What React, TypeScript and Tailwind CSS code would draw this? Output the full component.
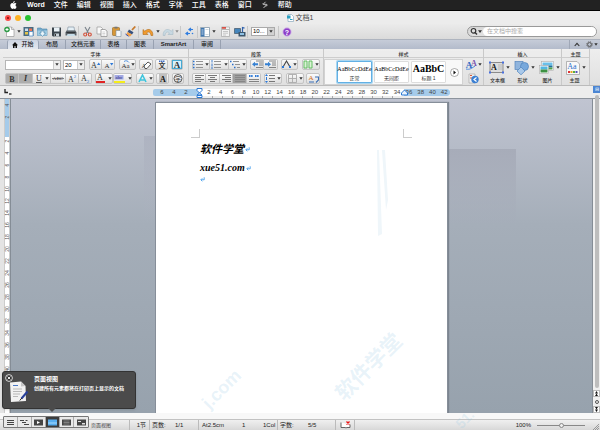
import React from 'react';

const menus = ['文件', '编辑', '视图', '插入', '格式', '字体', '工具', '表格', '窗口'];

const tabs = [
  { label: '布局', width: 'w-[27px]' },
  { label: '文档元素', width: 'w-[35px]' },
  { label: '表格', width: 'w-[26px]' },
  { label: '图表', width: 'w-[27px]' },
  { label: 'SmartArt', width: 'w-[40px]' },
  { label: '审阅', width: 'w-[27px]' },
];

const rulerNumbers = Array.from({ length: 21 }, (_, i) => (i + 1) * 2);
const verticalNumbers = ['4', '2', '', '2', '4', '6', '8', '10', '12', '14', '16', '18', '20', '22', '24', '26', '28', '30', '32', '34', '36', '38', '40', '42', '44'];

interface IconProps {
  w?: number;
  h?: number;
  children: React.ReactNode;
}

const Icon: React.FC<IconProps> = ({ w = 12, h = 10, children }) => (
  <svg width={w} height={h} viewBox={`0 0 ${w} ${h}`} fill="none" className="shrink-0" aria-hidden="true">
    {children}
  </svg>
);

const Arrow: React.FC = () => (
  <svg width="4" height="3" viewBox="0 0 4 3" className="shrink-0" aria-hidden="true">
    <path d="M0.3 0.3h3.4L2 2.8z" fill="#333" />
  </svg>
);

interface ButtonProps {
  label: string;
  className?: string;
  children: React.ReactNode;
}

// Raised ribbon button, used alone or inside a joined strip
const RibbonButton: React.FC<ButtonProps> = ({ label, className = '', children }) => (
  <button
    type="button"
    aria-label={label}
    className={`h-[11px] shrink-0 flex items-center justify-center rounded-[2px] border border-[#c4c4c4] bg-linear-to-b from-[#fbfbfb] to-[#dedede] ${className}`}
  >
    {children}
  </button>
);

const ToolButton: React.FC<ButtonProps> = ({ label, className = '', children }) => (
  <button type="button" aria-label={label} className={`h-[13px] shrink-0 flex items-center justify-center ${className}`}>
    {children}
  </button>
);

const Divider: React.FC = () => <span className="h-3 w-px shrink-0 bg-[#c8c8c8]" />;

const Letter: React.FC<{ x?: number; y?: number; size?: number; fill?: string; bold?: boolean; children: string }> = ({
  x = 5,
  y = 8,
  size = 8,
  fill = '#333',
  bold,
  children,
}) => (
  <text x={x} y={y} fontSize={size} fill={fill} textAnchor="middle" fontWeight={bold ? 700 : 400} fontFamily="Liberation Serif, Noto Sans CJK SC, serif">
    {children}
  </text>
);

const Lines: React.FC<{ rows: number[][]; color?: string }> = ({ rows, color = '#777' }) => (
  <>
    {rows.map(([x1, x2], i) => (
      <path key={i} d={`M${x1} ${1.5 + i * 2}H${x2}`} stroke={color} strokeWidth="1" />
    ))}
  </>
);

const MenuBar: React.FC = () => (
  <nav className="h-[11px] shrink-0 flex items-center gap-[9px] bg-[#222] border-b border-black pl-[10px] text-[7px] leading-[10px] font-medium text-white">
    <button type="button" aria-label="Apple" className="mr-px">
      <svg width="7" height="8" viewBox="0 0 14 16" fill="#fff" aria-hidden="true">
        <path d="M9.6 0c.1 1.3-.4 2.1-1 2.8-.7.7-1.500 1-2.300 1C6.200 2.600 6.700 1.800 7.300 1.200 7.900.5 8.800.1 9.600 0zM12.900 5.500c-1.200.7-1.800 1.600-1.800 2.900 0 1.400.8 2.500 2.100 3-.6 1.800-1.900 4.400-3.500 4.400-.9 0-1.400-.6-2.500-.6s-1.600.6-2.500.6C2.900 15.800.6 12.400.6 9c0-3 1.900-4.800 3.900-4.800 1.100 0 1.900.7 2.700.7.700 0 1.700-.8 3-.8 1.100 0 2 .5 2.700 1.400z" />
      </svg>
    </button>
    <button type="button" className="font-bold">Word</button>
    {menus.map((item) => (
      <button key={item} type="button" className="shrink-0">{item}</button>
    ))}
    <button type="button" aria-label="脚本" className="w-[8px]">
      <svg width="8" height="8" viewBox="0 0 8 8" fill="none" stroke="#bbb" aria-hidden="true">
        <path d="M4.500.8L2.300 3.200l3.600.2L2.500 7M1.500 2.700l2 1M4.500 5.200l2-.9" strokeWidth="1" />
      </svg>
    </button>
    <button type="button" className="shrink-0">帮助</button>
  </nav>
);

const TitleBar: React.FC = () => (
  <header className="h-[13px] shrink-0 flex items-center bg-[#ececec] px-[5px]">
    <div className="flex-1 flex gap-1">
      <button type="button" aria-label="关闭" className="size-[6px] rounded-full bg-[#fb4b48] flex items-center justify-center">
        <span className="size-[2px] rounded-full bg-[#7d0d0b]" />
      </button>
      <button type="button" aria-label="最小化" className="size-[6px] rounded-full bg-[#fdb124]" />
      <button type="button" aria-label="缩放" className="size-[6px] rounded-full bg-[#28c231]" />
    </div>
    <h1 className="flex items-center gap-[2px] text-[7px] leading-[10px] text-[#444]">
      <Icon w={7} h={8}>
        <path d="M1 .5h3.500L6.500 2.500v5H1z" fill="#fff" stroke="#8ba9bd" strokeWidth=".7" />
        <path d="M0 1.500h3.500v3H0z" fill="#2b9fc0" />
        <path d="M3 5.500h2.500" stroke="#2b9fc0" />
      </Icon>
      文档1
    </h1>
    <div className="flex-1" />
  </header>
);

const Toolbar: React.FC = () => (
  <div className="h-[15px] shrink-0 flex items-center bg-linear-to-b from-[#ebebeb] to-[#dadada] pl-[3px] pr-[3px]">
    <ToolButton label="新建" className="w-[18px] gap-[2px]">
      <Icon w={11} h={11}>
        <path d="M2.500 1h5l2.500 2.500V10.500h-7.500z" fill="#fff" stroke="#999" strokeWidth=".7" />
        <path d="M7.500 1v2.500H10" stroke="#999" strokeWidth=".7" />
        <circle cx="3" cy="3.500" r="2.800" fill="#2f9b46" />
        <path d="M3 2v3M1.500 3.500h3" stroke="#fff" />
      </Icon>
      <Arrow />
    </ToolButton>
    <ToolButton label="模板" className="w-[14px]">
      <Icon w={11} h={11}>
        <rect x=".5" y="1" width="10" height="9" fill="#496b82" />
        <path d="M2 2.500h3v2.500H2z" fill="#cbe1ee" /><path d="M6 2.500h3v2.500H6z" fill="#ed7454" />
        <path d="M2 6h3v2.500H2z" fill="#e5c349" /><path d="M6 5.500h4v4.500H6z" fill="#fff" stroke="#4a8ac7" strokeWidth=".7" />
      </Icon>
    </ToolButton>
    <ToolButton label="打开" className="w-[14px]">
      <Icon w={11} h={11}>
        <path d="M.5 2h3.500l1 1H10v6.500H.5z" fill="#74aacb" stroke="#4d88ac" strokeWidth=".6" />
        <path d="M.5 4.500h9.500v5H.5z" fill="#9ecae2" />
        <path d="M4 5h3v2h1.500L5.500 10.500 2.500 7H4z" fill="#e8f4fa" stroke="#4d88ac" strokeWidth=".6" />
      </Icon>
    </ToolButton>
    <ToolButton label="保存" className="w-[14px]">
      <Icon w={11} h={11}>
        <path d="M1 1.500h9v9H2l-1-1z" fill="#3b444c" /><path d="M3 1.500h5.500v4H3z" fill="#e9f1f6" />
        <path d="M3.500 7.500H8v3H3.500z" fill="#c9d2d8" /><path d="M4.500 8v2" stroke="#333" />
      </Icon>
    </ToolButton>
    <ToolButton label="打印" className="w-[15px]">
      <Icon w={12} h={11}>
        <path d="M3 1h6l.6 4H2.400z" fill="#e4eff5" stroke="#789" strokeWidth=".6" />
        <path d="M1.500 4.500h9l1 2v3h-11v-3z" fill="#5b6268" /><path d="M2.500 8h7l.8 2H1.700z" fill="#c5dce8" />
        <path d="M1.500 6.500h9" stroke="#2e3337" />
      </Icon>
    </ToolButton>
    <Divider />
    <ToolButton label="剪切" className="w-[16px]">
      <Icon w={11} h={11}>
        <path d="M3 1l3.500 6.200M8 1L4.500 7.200" stroke="#79828a" strokeWidth="1.100" />
        <circle cx="3.200" cy="8.500" r="1.500" stroke="#d34e37" strokeWidth="1.100" />
        <circle cx="7.800" cy="8.500" r="1.500" stroke="#d34e37" strokeWidth="1.100" />
      </Icon>
    </ToolButton>
    <ToolButton label="复制" className="w-[14px]">
      <Icon w={12} h={11}>
        <path d="M1 1h4l1.500 1.500V8H1z" fill="#fafafa" stroke="#999" strokeWidth=".7" />
        <path d="M5 3.500h4L11 5v5.500H5z" fill="#fff" stroke="#888" strokeWidth=".7" />
        <path d="M6.300 6h3M6.300 7.500h3M6.300 9h3" stroke="#bbb" strokeWidth=".6" />
      </Icon>
    </ToolButton>
    <ToolButton label="粘贴" className="w-[14px]">
      <Icon w={11} h={11}>
        <rect x="1.500" y="1.500" width="7" height="8" rx=".8" fill="#d79737" stroke="#94651c" strokeWidth=".6" />
        <path d="M3.500.7h3v1.800h-3z" fill="#777" />
        <path d="M5 4.500h4l1 1v5H5z" fill="#f5f8fa" stroke="#7b8fa0" strokeWidth=".6" />
      </Icon>
    </ToolButton>
    <ToolButton label="格式刷" className="w-[15px]">
      <Icon w={11} h={11}>
        <path d="M10.300.5L7 4" stroke="#c77a2d" strokeWidth="1.800" />
        <path d="M4 3.500l4.500 2.700L7 8.500 2.500 6z" fill="#37507d" />
        <path d="M2.500 6L7 8.500 5 10.500.8 9z" fill="#efa04b" />
        <path d="M.5 8l3 2.300" stroke="#2d4fc0" />
      </Icon>
    </ToolButton>
    <Divider />
    <ToolButton label="撤消" className="ml-[2px] w-[20px] gap-[2px]">
      <Icon w={12} h={10}>
        <path d="M1 2.500v5h5L4.500 6C6.500 4.200 8.500 4.800 9 8.500h1.800C11.200 3 6.500.5 2.800 4.200z" fill="#f19b2e" stroke="#b06a16" strokeWidth=".6" />
      </Icon>
      <Arrow />
    </ToolButton>
    <ToolButton label="恢复" className="w-[19px] gap-px opacity-50">
      <Icon w={12} h={10}>
        <path d="M11 2.500v5H6L7.500 6C5.500 4.200 3.500 4.800 3 8.500H1.200C.8 3 5.500.5 9.200 4.200z" fill="#b0d1e3" stroke="#6f98b0" strokeWidth=".6" />
      </Icon>
      <Arrow />
    </ToolButton>
    <Divider />
    <ToolButton label="显示标记" className="w-[16px]">
      <Icon w={9} h={9}>
        <path d="M1 6.500h4M3 5L1 6.500 3 8M5 2.500h3M6 1L4 2.500 6 4" stroke="#2f7de0" strokeWidth="1.200" />
        <circle cx="7.500" cy="6.500" r=".8" fill="#2f7de0" />
      </Icon>
    </ToolButton>
    <Divider />
    <ToolButton label="侧边栏" className="ml-px w-[18px] gap-[2px]">
      <Icon w={10} h={10}>
        <path d="M.5.5h9v9h-9z" fill="#fff" stroke="#8297a8" strokeWidth=".8" />
        <path d="M1 1h3.500v8.500H1z" fill="#4077b0" /><path d="M1.500 3h2M1.500 5h2M1.500 7h2" stroke="#fff" strokeWidth=".7" />
        <path d="M5.500 2.500h3M5.500 7.500h3" stroke="#bcc8d0" strokeWidth=".7" />
      </Icon>
      <Arrow />
    </ToolButton>
    <ToolButton label="工具箱" className="w-[16px]">
      <Icon w={9} h={11}>
        <path d="M.5 1h8v9.500h-8z" fill="#f3f3f3" stroke="#a6a6a6" strokeWidth=".7" />
        <path d="M1 1h4v1.800H1z" fill="#d75349" /><path d="M1 3.500h7" stroke="#999" strokeWidth=".7" />
        <path d="M2 5.500h5M2 7.200h5M2 9h3" stroke="#b3b3b3" strokeWidth=".7" />
      </Icon>
    </ToolButton>
    <ToolButton label="媒体浏览器" className="w-[14px]">
      <Icon w={12} h={11}>
        <path d="M.5 2.500h6v5h-6z" fill="#4585bb" stroke="#345" strokeWidth=".6" />
        <path d="M4.500 6h7v4.500h-7z" fill="#3d566c" /><path d="M6 7h4v2H6z" fill="#8ec1e5" />
        <path d="M8.500 6V1.500l2 .6" stroke="#3062ad" strokeWidth="1.200" />
      </Icon>
    </ToolButton>
    <Divider />
    <div className="relative mx-[3px] h-[9px] w-[24px] shrink-0">
      <select aria-label="显示比例" className="block h-[9px] w-full appearance-none border border-[#aaa] bg-white pl-px pr-[7px] text-[6px] leading-[7px] text-black">
        <option>10...</option>
      </select>
      <span className="pointer-events-none absolute inset-y-0 right-0 flex w-[8px] items-center justify-center border border-[#aaa] bg-[#d2d2d2]">
        <Arrow />
      </span>
    </div>
    <Divider />
    <ToolButton label="帮助" className="w-[16px]">
      <svg width="10" height="10" viewBox="0 0 10 10" aria-hidden="true">
        <circle cx="5" cy="5" r="4.200" fill="#8d3fc9" stroke="#d9c4e9" />
        <text x="5" y="7.500" textAnchor="middle" fontSize="7" fontWeight="700" fill="#fff" fontFamily="Liberation Sans, sans-serif">?</text>
      </svg>
    </ToolButton>
    <label className="ml-auto flex h-[11px] w-[130px] items-center overflow-hidden rounded-full border border-[#999] bg-[#e0e0e0] shadow-inner">
      <svg width="15" height="9" viewBox="0 0 15 9" fill="none" className="shrink-0" aria-hidden="true">
        <circle cx="5.500" cy="3.800" r="2.300" stroke="#333" strokeWidth="1.200" />
        <path d="M7 5.500l2 2" stroke="#333" strokeWidth="1.500" />
        <path d="M10 3.300h4L12 6z" fill="#333" />
      </svg>
      <input type="search" aria-label="搜索" placeholder="在文档中搜索" className="h-[9px] w-0 flex-1 rounded-l-full bg-white pl-1 text-[6px] leading-[9px] placeholder:text-[#aaa] outline-none" />
    </label>
  </div>
);

const TabBar: React.FC = () => (
  <div className="h-[10px] shrink-0 flex bg-linear-to-b from-[#c6ccd8] to-[#b3bbcb] border-t border-[#aeb4bf] pl-[7px] text-[6px] leading-[9px] text-[#222]">
    <button type="button" className="flex w-[32px] items-center justify-center gap-[3px] rounded-t-[2px] bg-linear-to-b from-[#cdd5e3] to-[#e3e7ef] border-x border-[#9aa4b5] font-medium">
      <svg width="6" height="6" viewBox="0 0 6 6" aria-hidden="true">
        <path d="M3 0L0 3.200h1V6h1.500V4h1v2H5V3.200h1z" fill="#111" />
      </svg>
      开始
    </button>
    {tabs.map((tab) => (
      <button
        key={tab.label}
        type="button"
        className={`${tab.width} border-r border-[#98a1b1] ${tab.label === 'SmartArt' ? 'font-bold' : 'font-medium'}`}
      >
        {tab.label}
      </button>
    ))}
    <div className="ml-auto flex items-center gap-[6px] border-l border-[#a0a8b7] pl-1 pr-[2px]">
      <button type="button" aria-label="折叠功能区">
        <svg width="6" height="5" viewBox="0 0 6 5" fill="none" aria-hidden="true">
          <path d="M.7 4L3 1.300 5.300 4" stroke="#333" strokeWidth="1.100" />
        </svg>
      </button>
      <button type="button" aria-label="功能区首选项" className="flex items-center gap-px">
        <svg width="7" height="7" viewBox="0 0 7 7" fill="none" aria-hidden="true">
          <circle cx="3.500" cy="3.500" r="1.900" stroke="#555" strokeWidth="1" />
          <circle cx="3.500" cy="3.500" r="2.800" stroke="#555" strokeWidth=".9" strokeDasharray="1.100 1.100" />
        </svg>
        <Arrow />
      </button>
    </div>
  </div>
);

const Group: React.FC<{ title: string; className?: string; children: React.ReactNode }> = ({ title, className = '', children }) => (
  <section className={`flex flex-col border-r border-[#c9c9c9] ${className}`}>
    <h2 className="mt-[2px] mb-[1px] h-[7px] border-b border-[#cdcdcd] bg-[#ececec] text-center text-[5px] leading-[6px] font-medium text-[#333]">{title}</h2>
    {children}
  </section>
);

const FontGroup: React.FC = () => (
  <Group title="字体" className="w-[186px] shrink-0">
    <div className="flex flex-col gap-[3px] pl-[2px]">
      <div className="flex items-center">
        <div className="flex h-[10px] w-[56px] border border-[#b5b5b5] bg-white">
          <input aria-label="字体名称" className="w-0 flex-1 text-[6px] leading-[8px] outline-none" />
          <button type="button" aria-label="选择字体" className="flex w-[7px] items-center justify-center border-l border-[#ccc] bg-[#eee]"><Arrow /></button>
        </div>
        <div className="ml-[2px] flex h-[10px] w-[22px] border border-[#b5b5b5] bg-white">
          <input aria-label="字号" defaultValue="20" className="w-0 flex-1 pl-px text-[6px] leading-[8px] outline-none" />
          <button type="button" aria-label="选择字号" className="flex w-[7px] items-center justify-center border-l border-[#ccc] bg-[#eee]"><Arrow /></button>
        </div>
        <RibbonButton label="增大字号" className="ml-[4px] w-[13px] rounded-r-none">
          <Icon w={11} h={9}><Letter x={4}>A</Letter><path d="M7 5l1.700-2.500L10.400 5z" fill="#2b78d8" /></Icon>
        </RibbonButton>
        <RibbonButton label="减小字号" className="w-[13px] rounded-l-none border-l-0">
          <Icon w={11} h={9}><Letter x={4} size={7}>A</Letter><path d="M7 3l1.700 2.500L10.400 3z" fill="#2b78d8" /></Icon>
        </RibbonButton>
        <RibbonButton label="更改大小写" className="ml-[4px] w-[17px] gap-px">
          <Icon w={9} h={9}><Letter x={3} size={7}>A</Letter><Letter x={7} size={7}>a</Letter><path d="M3 1.500c2-1.500 4-.5 5 1" stroke="#2b78d8" strokeWidth=".8" /></Icon>
          <Arrow />
        </RibbonButton>
        <RibbonButton label="清除格式" className="ml-[3px] w-[14px]">
          <Icon w={11} h={9}><Letter x={3} size={6}>A</Letter><path d="M3 6l4-4 3 2-4 4.500H4z" fill="#fff" stroke="#444" strokeWidth=".9" /></Icon>
        </RibbonButton>
        <RibbonButton label="拼音指南" className="ml-[2px] w-[13px]">
          <Icon w={10} h={9}><path d="M2 1.300h6" stroke="#3f6cc4" strokeWidth="1.500" strokeDasharray="1.500 .5" /><Letter y={8} size={7} bold>文</Letter></Icon>
        </RibbonButton>
        <RibbonButton label="字符边框" className="ml-[3px] w-[12px]">
          <Icon w={10} h={9}><rect x=".5" y=".5" width="9" height="8" fill="#d8f0fa" stroke="#48a9d2" /><Letter y={8} size={9} bold>A</Letter></Icon>
        </RibbonButton>
      </div>
      <div className="flex items-center">
        <RibbonButton label="粗体" className="w-[14px] rounded-r-none bg-none bg-[#adadad] border-[#8b8b8b]">
          <Icon w={10} h={9}><Letter bold>B</Letter></Icon>
        </RibbonButton>
        <RibbonButton label="斜体" className="w-[14px] rounded-none border-l-0 bg-none bg-[#adadad] border-[#8b8b8b]">
          <span className="font-[Liberation_Serif] text-[8px] leading-[8px] italic font-bold text-[#333]">I</span>
        </RibbonButton>
        <RibbonButton label="下划线" className="w-[18px] gap-[2px] rounded-none border-l-0">
          <Icon w={8} h={9}><Letter x={4} y={7}>U</Letter><path d="M1 8.500h6" stroke="#333" strokeWidth=".8" /></Icon>
          <Arrow />
        </RibbonButton>
        <RibbonButton label="删除线" className="w-[15px] rounded-none border-l-0">
          <Icon w={13} h={9}><Letter x={6} y={6} size={5}>ABC</Letter><path d="M0 4.500h12" stroke="#333" strokeWidth=".6" /></Icon>
        </RibbonButton>
        <RibbonButton label="上标" className="w-[13px] rounded-none border-l-0">
          <Icon w={10} h={9}><Letter x={4}>A</Letter><Letter x={8} y={4} size={5} fill="#2b78d8">2</Letter></Icon>
        </RibbonButton>
        <RibbonButton label="下标" className="w-[13px] rounded-l-none border-l-0">
          <Icon w={10} h={9}><Letter x={4} y={7}>A</Letter><Letter x={8} y={9} size={5} fill="#2b78d8">2</Letter></Icon>
        </RibbonButton>
        <RibbonButton label="字体颜色" className="ml-[3px] w-[18px] gap-[3px]">
          <Icon w={9} h={9}><Letter x={4} y={6}>A</Letter><path d="M0 8h9" stroke="#e02424" strokeWidth="2" /></Icon>
          <Arrow />
        </RibbonButton>
        <RibbonButton label="突出显示" className="w-[19px] gap-[3px]">
          <Icon w={11} h={9}><path d="M.5 1h9v4.500h-9z" fill="#a3a9e2" /><Letter x={5} y={5} size={5} fill="#2b2b80">abc</Letter><path d="M0 8h11" stroke="#f4ec1c" strokeWidth="2" /></Icon>
          <Arrow />
        </RibbonButton>
        <RibbonButton label="文本效果" className="ml-[4px] w-[18px] gap-[2px]">
          <Icon w={9} h={9}><path d="M1 8L4.500 1 8 8M2.500 6h4" stroke="#3fc5dd" strokeWidth="1.600" /></Icon>
          <Arrow />
        </RibbonButton>
        <RibbonButton label="字符底纹" className="ml-[2px] w-[13px]">
          <Icon w={10} h={9}><path d="M1 0h8v9H1z" fill="#c0c0c0" /><Letter bold fill="#111">A</Letter></Icon>
        </RibbonButton>
        <RibbonButton label="带圈字符" className="ml-[3px] w-[12px]">
          <Icon w={10} h={9}><circle cx="5" cy="4.500" r="4" stroke="#333" strokeWidth=".8" /><Letter y={6.7} size={6}>字</Letter></Icon>
        </RibbonButton>
      </div>
    </div>
  </Group>
);

const bullets = <path d="M0 1.500h1.500M0 4.500h1.500M0 7.500h1.500" stroke="#2b6fc9" strokeWidth="1.300" />;
const bulletLines = <path d="M3 1.500h7M3 4.500h7M3 7.500h7" stroke="#888" strokeWidth=".9" />;

const ParagraphGroup: React.FC = () => (
  <Group title="段落" className="w-[135px] shrink-0">
    <div className="flex flex-col gap-[3px] pl-[3px]">
      <div className="flex items-center">
        <RibbonButton label="项目符号" className="w-[18px] gap-[2px] rounded-r-none">
          <Icon w={10} h={9}>{bullets}{bulletLines}</Icon><Arrow />
        </RibbonButton>
        <RibbonButton label="编号" className="w-[19px] gap-[3px] rounded-none border-l-0">
          <Icon w={10} h={9}><path d="M1 0v2.500M1 3.500V6M1 6.500V9" stroke="#2b6fc9" strokeWidth=".9" />{bulletLines}</Icon><Arrow />
        </RibbonButton>
        <RibbonButton label="多级列表" className="w-[18px] gap-[2px] rounded-l-none border-l-0">
          <Icon w={10} h={9}><path d="M0 1.500h1.500M2 4.500h1.500M4 7.500h1.500" stroke="#2b6fc9" strokeWidth="1.300" /><path d="M3 1.500h6M5 4.500h5M7 7.500h3" stroke="#888" strokeWidth=".9" /></Icon><Arrow />
        </RibbonButton>
        <RibbonButton label="减少缩进" className="ml-[3px] w-[14px] rounded-r-none">
          <Icon w={11} h={9}><path d="M4 1h7M7 3h4M7 5h4M4 7.500h7" stroke="#777" strokeWidth=".9" /><path d="M0 4.200l3-2.500v1.500h3v2H3v1.500z" fill="#3681d3" /></Icon>
        </RibbonButton>
        <RibbonButton label="增加缩进" className="w-[14px] rounded-l-none border-l-0">
          <Icon w={11} h={9}><path d="M4 1h7M7 3h4M7 5h4M4 7.500h7" stroke="#777" strokeWidth=".9" /><path d="M6 4.200L3 1.700v1.500H0v2h3v1.500z" fill="#3681d3" /></Icon>
        </RibbonButton>
        <RibbonButton label="中文版式" className="ml-[3px] w-[17px] gap-[2px]">
          <Icon w={9} h={9}><path d="M1 7l3.500-6L8 7" stroke="#444" strokeWidth="1.100" /><path d="M0 6h2v2H0zM7 6h2v2H7z" fill="#2b78d8" /></Icon><Arrow />
        </RibbonButton>
        <RibbonButton label="分栏" className="ml-[4px] w-[18px] gap-[2px]">
          <Icon w={10} h={9}><path d="M1 1h3v7H1zM6 1h3v7H6z" fill="#d9f4d4" stroke="#57b857" strokeWidth=".9" /></Icon><Arrow />
        </RibbonButton>
      </div>
      <div className="flex items-center">
        <RibbonButton label="左对齐" className="w-[14px] rounded-r-none">
          <Icon w={9} h={9}><Lines rows={[[0, 9], [0, 6], [0, 9], [0, 6]]} /></Icon>
        </RibbonButton>
        <RibbonButton label="居中" className="w-[14px] rounded-none border-l-0">
          <Icon w={9} h={9}><Lines rows={[[0, 9], [2, 7], [0, 9], [2, 7]]} /></Icon>
        </RibbonButton>
        <RibbonButton label="右对齐" className="w-[13px] rounded-none border-l-0">
          <Icon w={9} h={9}><Lines rows={[[0, 9], [3, 9], [0, 9], [3, 9]]} /></Icon>
        </RibbonButton>
        <RibbonButton label="两端对齐" className="w-[14px] rounded-none border-l-0 bg-none bg-[#a0a0a0] border-[#888]">
          <Icon w={10} h={9}><Lines rows={[[0, 10], [0, 10], [0, 10], [0, 10]]} color="#868686" /></Icon>
        </RibbonButton>
        <RibbonButton label="分散对齐" className="w-[14px] rounded-l-none border-l-0">
          <Icon w={10} h={9}><path d="M0 2h4M6 2h4" stroke="#2b78d8" strokeWidth="2" strokeDasharray="1.500 .6" /><path d="M0 5.500h10M0 7.500h10" stroke="#777" strokeWidth=".9" /></Icon>
        </RibbonButton>
        <RibbonButton label="行距" className="ml-[3px] w-[18px] gap-[2px]">
          <Icon w={10} h={9}><path d="M1.500 0L3 2H0zM1.500 9L3 7H0zM1 3h1v3H1z" fill="#2b78d8" /><path d="M4 1.500h6M4 4.500h6M4 7.500h6" stroke="#777" /></Icon><Arrow />
        </RibbonButton>
        <RibbonButton label="边框" className="ml-[4px] w-[18px] gap-[2px]">
          <Icon w={9} h={9}><path d="M.5.5h8v8h-8zM4.500.5v8M.5 4.500h8" stroke="#aaa" strokeWidth=".9" /></Icon><Arrow />
        </RibbonButton>
        <RibbonButton label="排序" className="ml-[2px] w-[14px]">
          <Icon w={11} h={9}><Letter x={3} y={6} size={7} fill="#d06a15">A</Letter><path d="M7 3h3.500v3L8 8.500M1 8h5" stroke="#3b6fb5" strokeWidth="1.100" /></Icon>
        </RibbonButton>
      </div>
    </div>
  </Group>
);

const styles = [
  { name: '正常', sample: 'AaBbCcDdEe', text: 'text-[6px]', box: 'border-[#62b0e4] ring-1 ring-[#a9d6f1]' },
  { name: '无间距', sample: 'AaBbCcDdEe', text: 'text-[6px]', box: 'border-[#ddd]' },
  { name: '标题 1', sample: 'AaBbC', text: 'text-[10px] font-bold', box: 'border-[#ddd]' },
];

const StyleGroup: React.FC = () => (
  <Group title="样式" className="min-w-0 flex-1">
    <div className="flex">
      <div className="flex h-[26px] flex-1 items-center justify-end gap-[2px] border border-[#d2d2d2] bg-[#f8f8f8] pr-[2px]">
        {styles.map((style) => (
          <button key={style.name} type="button" className={`flex h-[22px] w-[35px] shrink-0 flex-col items-center rounded-[1px] border bg-white ${style.box}`}>
            <span className={`flex h-[13px] items-center whitespace-nowrap font-[Liberation_Serif] leading-[12px] text-black ${style.text}`}>{style.sample}</span>
            <span className="text-[5px] leading-[7px] text-[#333]">{style.name}</span>
          </button>
        ))}
        <button type="button" aria-label="更多样式" className="ml-px flex w-[11px] shrink-0 justify-center">
          <Icon w={9} h={9}><circle cx="4.500" cy="4.500" r="4" fill="#fff" stroke="#888" strokeWidth=".7" /><path d="M3.500 2.500v4l2.500-2z" fill="#111" /></Icon>
        </button>
      </div>
      <div className="flex w-[20px] shrink-0 flex-col items-center gap-[3px]">
        <button type="button" aria-label="更改样式" className="flex items-center gap-px">
          <Icon w={12} h={11}>
            <Letter x={4} y={9} size={9} bold fill="#3067c2">A</Letter><Letter x={9} y={7} size={8} bold fill="#7a52ad">A</Letter>
            <path d="M1 10c4 1 6-1 9-3" stroke="#4b86db" />
          </Icon>
          <Arrow />
        </button>
        <button type="button" aria-label="管理样式">
          <Icon w={11} h={11}>
            <path d="M1 1h6v9H1z" fill="#f1f1f1" stroke="#aaa" strokeWidth=".7" /><path d="M2 2.500h2M2 5h2" stroke="#d65b3a" />
            <circle cx="7" cy="6.500" r="3.700" fill="#3b7fd2" /><path d="M8.500 4.500L6 6.500l2.500 2" stroke="#fff" strokeWidth="1.200" />
          </Icon>
        </button>
      </div>
    </div>
  </Group>
);

const BigButton: React.FC<{ label: string; children: React.ReactNode }> = ({ label, children }) => (
  <button type="button" className="flex w-[25px] flex-col items-center gap-px text-[5px] leading-[6px] font-medium text-[#333]">
    <span className="flex h-[17px] items-center gap-[2px] pl-[3px]">{children}<Arrow /></span>
    <span>{label}</span>
  </button>
);

const Ribbon: React.FC = () => (
  <div className="h-[37px] shrink-0 flex bg-linear-to-b from-[#eee] to-[#e0e0e0] border-b border-[#bbb] pl-[3px] pr-[10px]">
    <FontGroup />
    <ParagraphGroup />
    <StyleGroup />
    <Group title="插入" className="w-[78px] shrink-0">
      <div className="flex justify-center">
        <BigButton label="文本框">
          <Icon w={15} h={13}>
            <rect x="1" y="1.500" width="13" height="10" fill="#ddd" stroke="#777" strokeWidth=".8" />
            <path d="M0 .5h2v2H0zM13 .5h2v2h-2zM0 10.500h2v2H0zM13 10.500h2v2h-2z" fill="#476ee0" />
            <Letter x={5} y={9} size={8} bold fill="#111">A</Letter>
            <path d="M9 4h4M9 6h4M9 8h4" stroke="#aaa" strokeWidth=".7" />
          </Icon>
        </BigButton>
        <BigButton label="形状">
          <Icon w={15} h={14}>
            <rect x="1" y=".5" width="8" height="8" fill="#8fb4dd" stroke="#5585bd" strokeWidth=".7" />
            <circle cx="10.500" cy="5.500" r="4" fill="#77a8dc" stroke="#4e82bd" strokeWidth=".7" />
            <path d="M7 6l4 4-4 3.800L3 10z" fill="#a9c9ea" stroke="#4e82bd" strokeWidth=".7" />
          </Icon>
        </BigButton>
        <BigButton label="图片">
          <Icon w={15} h={13}>
            <rect x="2.500" y=".5" width="12" height="9" fill="#fff" stroke="#aaa" strokeWidth=".6" />
            <path d="M3.500 1.500h10v3h-10z" fill="#6abfe9" /><path d="M3.500 4.500h10v2h-10z" fill="#216e9b" /><path d="M3.500 6.500h10v2h-10z" fill="#52a04b" />
            <rect x=".5" y="4.500" width="9" height="8" fill="#fff" stroke="#aaa" strokeWidth=".6" />
            <path d="M1.500 5.500h7v3h-7z" fill="#53b7e0" /><path d="M1.500 8.500h7v3h-7z" fill="#3e9142" />
          </Icon>
        </BigButton>
      </div>
    </Group>
    <Group title="主题" className="w-[28px] shrink-0">
      <BigButton label="主题">
        <Icon w={14} h={14}>
          <path d="M.5.500h10.500l2.500 2.500v10.500H.5z" fill="#f9f9f9" stroke="#999" strokeWidth=".7" />
          <Letter x={6} y={8} size={8} fill="#2b6fc9">Aa</Letter>
          <path d="M2 11h2" stroke="#d33" strokeWidth="2" /><path d="M4.500 11h2" stroke="#e9a61b" strokeWidth="2" />
          <path d="M7 11h2" stroke="#58ae3d" strokeWidth="2" /><path d="M9.500 11h2" stroke="#5553b8" strokeWidth="2" />
        </Icon>
      </BigButton>
    </Group>
  </div>
);

const HorizontalRuler: React.FC = () => (
  <div className="relative h-[13px] shrink-0 flex justify-center border-b border-[#8d949d] bg-[#ededed] pr-[8px] pl-[11px]">
    <button type="button" aria-label="制表位" className="absolute left-[4px] top-[3px]">
      <Icon w={8} h={7}><path d="M1 0v3.500h3" stroke="#222" strokeWidth="1.300" /><path d="M5 5h2.500" stroke="#222" strokeWidth="1.300" /></Icon>
    </button>
    <div className="relative mt-[3px] flex h-[7px] w-[297px] overflow-hidden rounded-[2px] bg-linear-to-r from-[#a5cbea] from-[46px] via-white via-[46px] to-white text-[6px] leading-[7px] text-[#444]">
      <span className="absolute inset-y-0 right-0 w-[46px] rounded-r-[3px] bg-[#a5cbea]" />
      <div className="relative flex w-[50px] shrink-0 pl-[3px]">
        {['6', '4', '2'].map((n) => (
          <span key={n} className="w-3 text-center">{n}</span>
        ))}
      </div>
      <div className="relative flex flex-1">
        {rulerNumbers.map((n) => (
          <span key={n} className="flex w-0 flex-1 justify-center">{n}</span>
        ))}
      </div>
    </div>
    {/* Indent markers and tab stops */}
    <div className="pointer-events-none absolute inset-x-0 top-[2px] flex justify-center pr-[8px] pl-[11px]">
      <div className="flex w-[297px] items-start pl-[43px] pr-[42px]">
        <Icon w={7} h={10}>
          <path d="M1 .5h5v2L3.500 5 1 2.500zM3.500 5L6 7H1zM1 7.500h5v2H1z" fill="#fff" stroke="#2a78d4" strokeWidth="1" />
        </Icon>
        <span className="mt-[8px] h-[2px] flex-1 bg-[repeating-linear-gradient(90deg,transparent_0_9px,#aaa_9px_10px)]" />
        <Icon w={7} h={10}><path d="M3.500 2L6.500 5v2h-6V5z" fill="#eaf4fd" stroke="#2a78d4" strokeWidth="1" /></Icon>
      </div>
    </div>
  </div>
);

const Tooltip: React.FC = () => (
  <div role="tooltip" className="absolute bottom-[4px] left-[2px] z-10 flex h-[38px] w-[134px] rounded-[3px] border border-[#333] bg-[#4b4b4b] pl-[6px] text-white shadow">
    <button type="button" aria-label="关闭提示" className="absolute left-[2px] top-[2px]">
      <Icon w={8} h={8}><circle cx="4" cy="4" r="3.400" fill="#333" stroke="#eee" strokeWidth=".9" /><path d="M2.600 2.600l2.800 2.800M5.400 2.600L2.600 5.400" stroke="#fff" strokeWidth=".9" /></Icon>
    </button>
    <svg width="20" height="22" viewBox="0 0 20 22" className="mt-[9px] shrink-0" aria-hidden="true">
      <path d="M1 1.500L12 .5l4.500 4.500.5 15L2 21z" fill="#f2f2f2" />
      <path d="M12 .5v5l4.500-.5z" fill="#c6c6c6" />
      <path d="M4 4.500h5" stroke="#4a78c5" />
      <path d="M4 8h9M4 10.500h9M4 13h7M4 15.500h5" stroke="#aaa" strokeWidth=".8" />
      <path d="M18.500 10.500l-6 7" stroke="#28409c" strokeWidth="2" /><path d="M12.800 17l-2 2.500" stroke="#222" />
    </svg>
    <div className="ml-[5px] mt-[3px] whitespace-nowrap leading-[9px]">
      <p className="text-[6px] font-bold">页面视图</p>
      <p className="text-[5px] font-bold">创建所有元素都将在打印页上显示的文档</p>
    </div>
    <span className="absolute top-full left-[45px] border-x-4 border-t-4 border-x-transparent border-t-[#4b4b4b]" />
  </div>
);

const Mark: React.FC = () => (
  <svg width="5" height="5" viewBox="0 0 5 5" fill="none" aria-hidden="true">
    <path d="M4.200.3v2.500H1M2.300 1.300L.8 2.800l1.500 1.500" stroke="#4ba0ec" strokeWidth=".9" />
  </svg>
);

const Watermark: React.FC<{ className: string; children: string }> = ({ className, children }) => (
  <span aria-hidden="true" className={`pointer-events-none absolute -rotate-45 whitespace-nowrap font-bold text-[#8cc4e2]/20 ${className}`}>
    {children}
  </span>
);

const Document: React.FC = () => (
  <main className="relative flex min-h-0 flex-1">
    {/* Vertical ruler */}
    <div className="relative w-[11px] shrink-0 overflow-hidden border-r border-[#858d96] bg-[#e4e4e4]">
      <div className="absolute inset-y-0 left-[4px] w-[6px] border-x border-[#ccc] bg-linear-to-b from-[#a5cbea] from-[38px] via-white via-[38px] to-white">
        {verticalNumbers.map((n, i) => (
          <span key={i} className="flex h-3 items-center justify-center">
            <span className="-rotate-90 text-[5px] leading-[6px] text-[#555]">{n}</span>
          </span>
        ))}
      </div>
    </div>
    <div className="relative flex flex-1 justify-center overflow-hidden bg-linear-to-b from-[#c0c4d1] via-[#a5aeb9] via-40% to-[#97a2ad] pt-[3px]">
      <div className="ml-[56px] flex w-[372px] shrink-0 pt-[34px]">
        <span className="h-[88px] w-[13px] bg-linear-to-b from-[#acb1bf]/80 to-[#a5adb8]/0" />
        <span className="mt-[13px] ml-auto h-[75px] w-[68px] bg-linear-to-b from-[#a7acb9] to-[#a5adb9]/30" />
      </div>
      <article className="absolute inset-y-0 top-[3px] w-[293px] border-x border-t border-[#868e99] bg-white shadow-[1px_0_1px_#7c8590]">
        <div className="flex justify-between px-[35px] pt-[26px]">
          <span className="size-[9px] border-r border-b border-[#ccc]" />
          <span className="size-[9px] border-l border-b border-[#ccc]" />
        </div>
        <div className="relative mt-[3px] ml-[44px] text-black">
          <p className="flex items-center gap-px text-[11px] leading-[16px] font-bold italic">软件学堂<Mark /></p>
          <p className="flex items-center gap-px pt-[4px] font-[Liberation_Serif] text-[10px] leading-[14px] font-bold italic">xue51.com<Mark /></p>
          <p className="flex h-[9px] items-center"><Mark /></p>
        </div>
        <svg width="14" height="86" viewBox="0 0 14 86" className="absolute top-[47px] right-[58px]" aria-hidden="true">
          <path d="M2 0h2l3 84-4 2zM7 0h3l3 50-2 10z" fill="#eff6fa" />
        </svg>
        <Watermark className="top-[252px] left-[171px] text-[21px] leading-[24px]">软件学堂</Watermark>
        <Watermark className="top-[276px] left-[42px] text-[18px] leading-[20px]">j.com</Watermark>
      </article>
    </div>
    {/* Vertical scroll bar */}
    <div className="flex w-[8px] shrink-0 flex-col items-center border-l border-[#858d96] bg-[#efefef]">
      <span className="-mt-[13px] h-[7px] w-full bg-[#4c86d3] text-center text-[5px] leading-[6px] text-white">⊟</span>
      <span className="mt-[2px] w-[4px] flex-1 rounded-full bg-[#bdbdbd]" />
      <div className="mt-[2px] flex flex-col items-center gap-px">
        <button type="button" aria-label="上一页" className="flex h-[7px] w-[7px] items-center justify-center border border-[#bbb] bg-white">
          <Icon w={3} h={5}><path d="M0 2.500L1.500 0 3 2.500zM0 5l1.500-2.500L3 5z" fill="#111" /></Icon>
        </button>
        <button type="button" aria-label="选择浏览对象" className="flex h-[7px] w-[7px] items-center justify-center">
          <span className="size-[4px] rounded-full border border-[#555]" />
        </button>
        <button type="button" aria-label="下一页" className="flex h-[7px] w-[7px] items-center justify-center border border-[#bbb] bg-white">
          <Icon w={3} h={5}><path d="M0 0h3L1.500 2.500zM0 2.500h3L1.500 5z" fill="#111" /></Icon>
        </button>
      </div>
    </div>
    <Tooltip />
  </main>
);

const views = [
  { name: '草稿视图', art: <path d="M1 1.500h7M1 3.500h7M1 5.500h7" stroke="#444" /> },
  { name: '大纲视图', art: <path d="M0 1.500h4M2 3.500h4M4 5.500h5M5.500 1.500h2" stroke="#444" /> },
  { name: '出版布局视图', art: <><path d="M0 .5h9v6H0z" fill="#444" /><path d="M3 2l3 1.500L3 5z" fill="#fff" /></> },
  { name: '页面视图', art: <><path d="M0 .5h9v6H0z" fill="#57aef0" /><path d="M0 4h9" stroke="#a8dafc" /></> },
  { name: '笔记本布局视图', art: <><path d="M0 .5h9v6H0z" fill="#444" /><path d="M1.500 2h6M1.500 3.500h6M1.500 5h6" stroke="#aaa" strokeWidth=".6" /></> },
  { name: '全屏视图', art: <><path d="M0 .5h9v6H0z" fill="#444" /><path d="M1 2h3v1H1zM5 4h3v1.500H5z" fill="#ddd" /></> },
];

const StatusBar: React.FC = () => (
  <footer className="relative shrink-0">
    <div className="h-[7px] border-b border-[#c2c2c2] bg-[#f8f8f8]" />
    <div className="flex h-[10px] items-center bg-linear-to-b from-[#f0f0f0] to-[#d8d8d8] pl-[91px] pr-[1px] text-[6px] leading-[10px] text-[#222]">
      <span className="w-[38px] text-[5px] text-[#444]">页面视图</span>
      <span className="w-[21px] border-x border-[#bbb] pr-[3px] text-right">1节</span>
      <span className="w-[25px] pl-[2px]">页数:</span>
      <span className="w-[24px] border-r border-[#bbb]">1/1</span>
      <span className="w-[43px] pl-[3px]">At2.5cm</span>
      <span className="w-[21px]">1</span>
      <span className="w-[15px] border-r border-[#bbb]">1Col</span>
      <span className="w-[30px] pl-[2px]">字数:</span>
      <span className="w-[28px] border-r border-[#bbb]">5/5</span>
      <button type="button" aria-label="拼写和语法" className="flex h-[10px] w-[19px] items-center justify-center border-r border-[#bbb]">
        <Icon w={11} h={8}><path d="M1 1.500v5h4.500l.5.700.5-.7H10v-3" fill="#fff" stroke="#555" strokeWidth=".9" /><path d="M6.500.5l3 3M9.500.5l-3 3" stroke="#e11" strokeWidth="1.300" /></Icon>
      </button>
      <label className="ml-auto flex items-center gap-[6px]">
        100%
        <input
          type="range"
          defaultValue={52}
          className="h-[6px] w-[48px] appearance-none bg-transparent [&::-webkit-slider-runnable-track]:h-px [&::-webkit-slider-runnable-track]:bg-[#888] [&::-webkit-slider-thumb]:-mt-[2px] [&::-webkit-slider-thumb]:size-[5px] [&::-webkit-slider-thumb]:appearance-none [&::-webkit-slider-thumb]:rounded-full [&::-webkit-slider-thumb]:border [&::-webkit-slider-thumb]:border-[#888] [&::-webkit-slider-thumb]:bg-[#eee]"
        />
      </label>
      <svg width="6" height="6" viewBox="0 0 6 6" className="ml-[8px] self-end" stroke="#888" strokeWidth=".8" aria-hidden="true">
        <path d="M0 6l6-6M2 6l4-4M4 6l2-2" />
      </svg>
    </div>
    <div className="absolute left-[3px] top-[3px] z-10 flex rounded-[1px] border border-[#777] bg-[#e9e9e9]">
      {views.map((view, i) => (
        <button
          key={view.name}
          type="button"
          aria-label={view.name}
          className={`flex h-[10px] w-[14px] items-center justify-center border-r border-[#aaa] last:border-r-0 ${i === 3 ? 'bg-[#3c3c3c]' : ''}`}
        >
          <Icon w={9} h={7}>{view.art}</Icon>
        </button>
      ))}
    </div>
    <Watermark className="bottom-[4px] right-[126px] text-[14px] leading-[14px]">51.</Watermark>
  </footer>
);

const App: React.FC = () => (
  <div className="flex h-screen flex-col overflow-hidden bg-[#ececec] font-['Liberation_Sans','Noto_Sans_CJK_SC',sans-serif]">
    <MenuBar />
    <TitleBar />
    <Toolbar />
    <TabBar />
    <Ribbon />
    <HorizontalRuler />
    <Document />
    <StatusBar />
  </div>
);

export default App;
